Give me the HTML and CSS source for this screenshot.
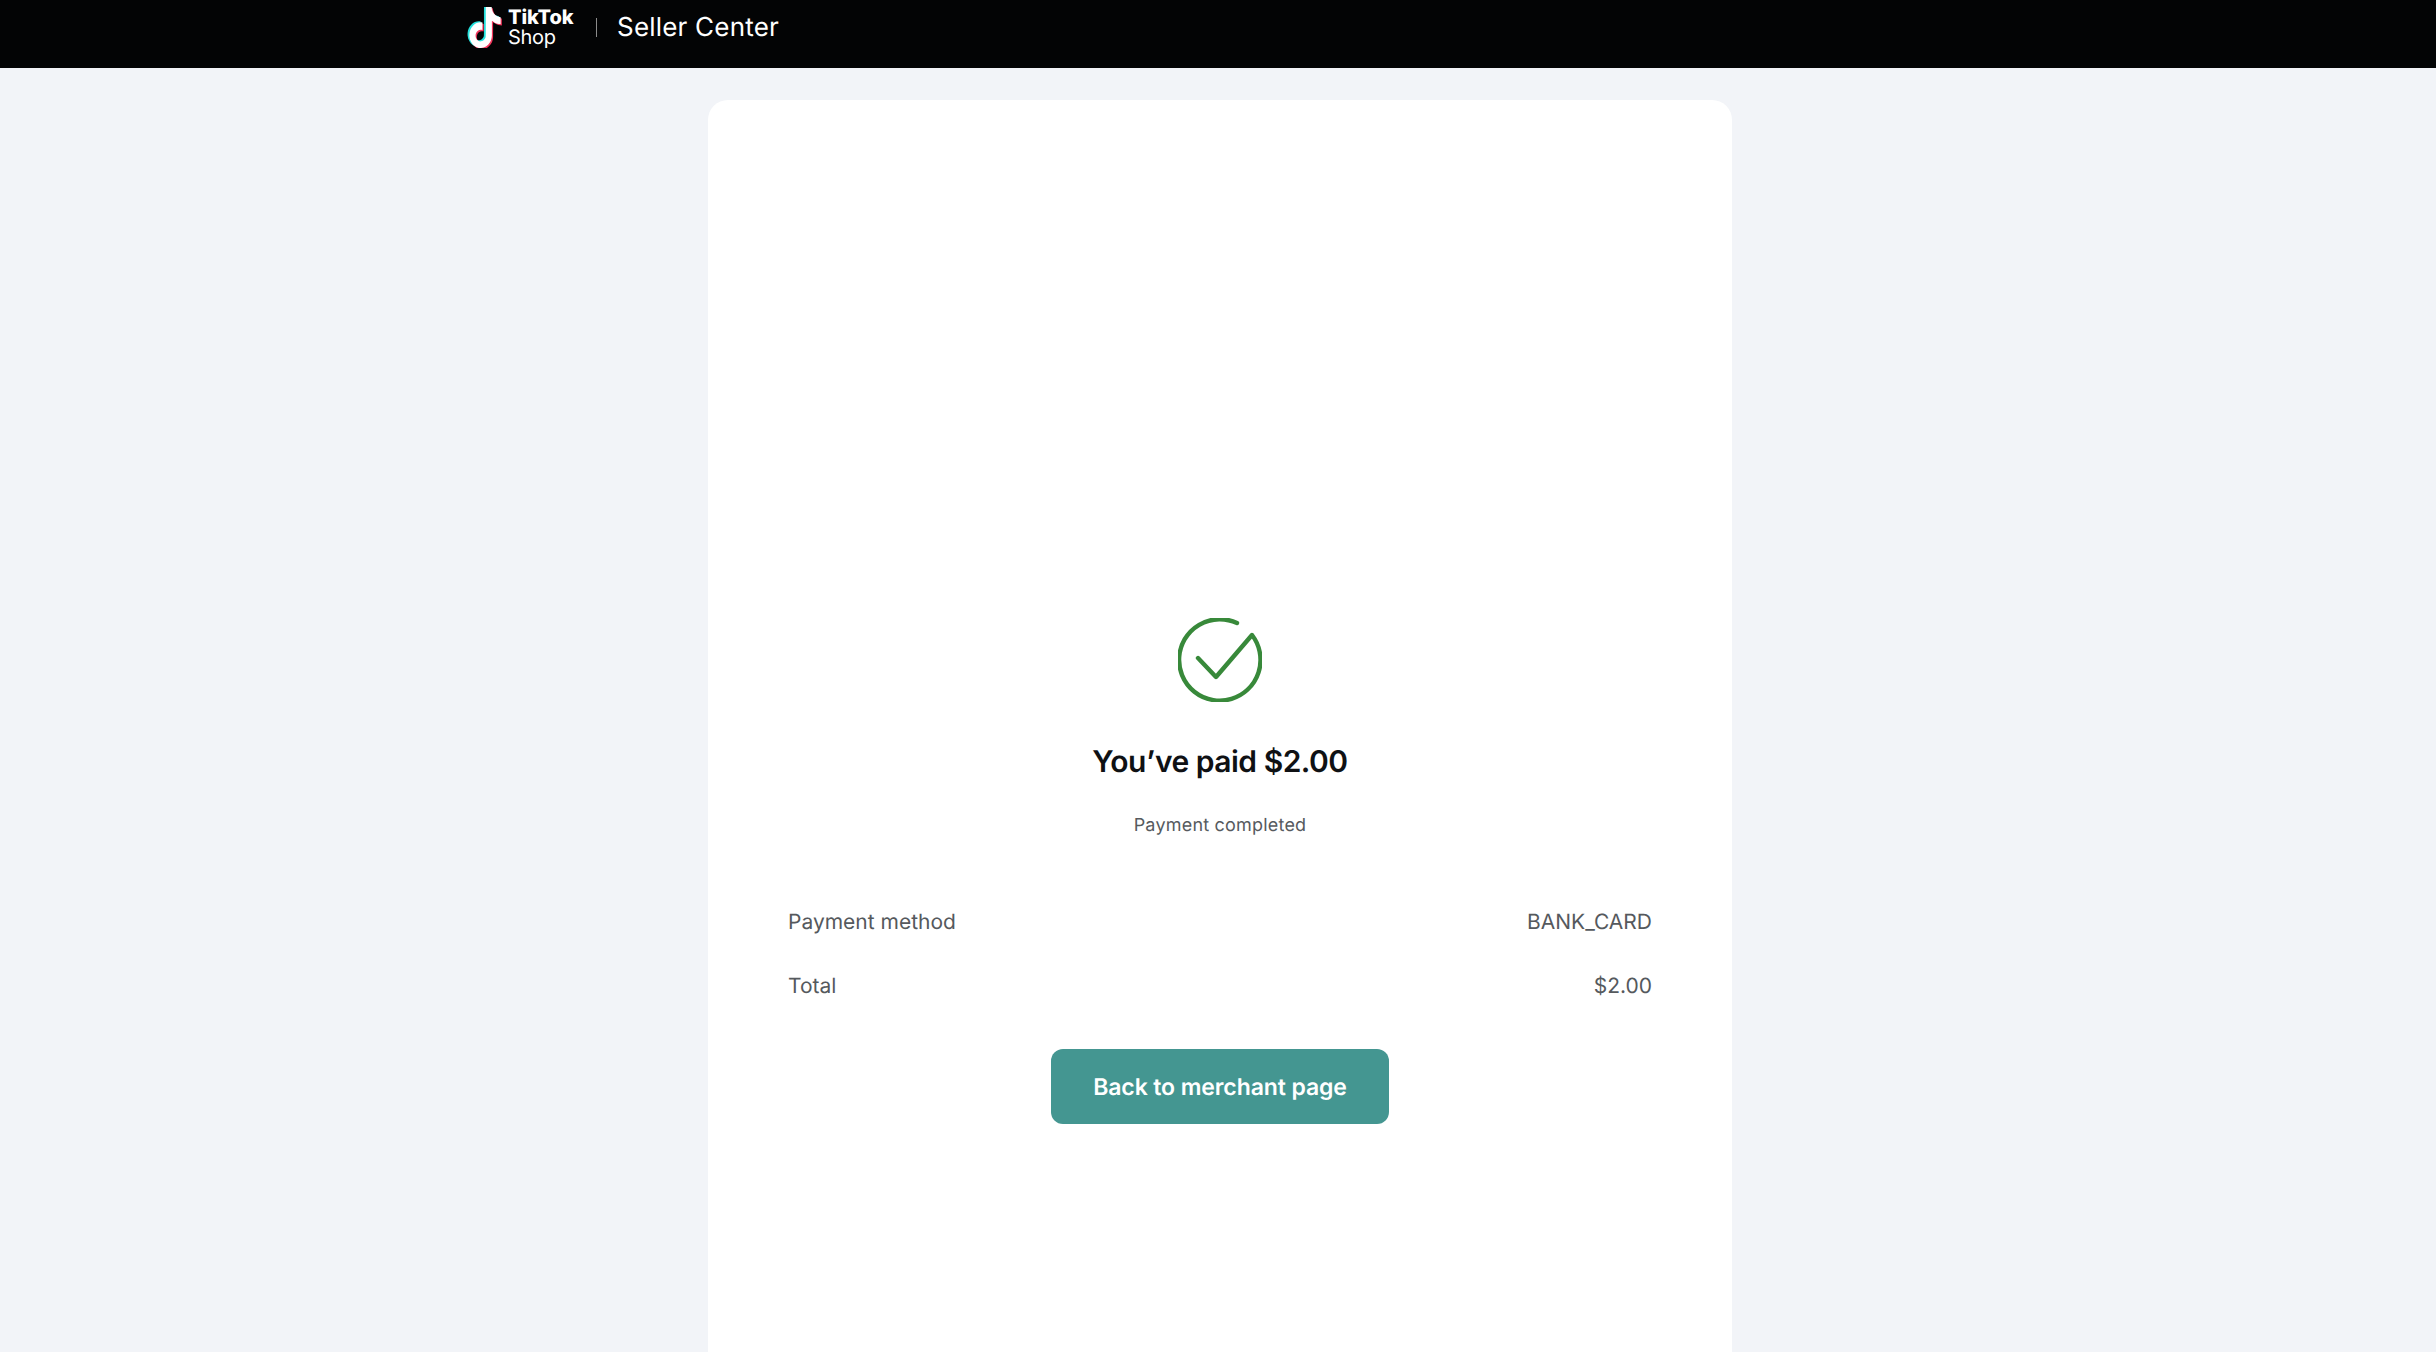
FILE: index.html
```html
<!DOCTYPE html>
<html lang="en">
<head>
<meta charset="utf-8">
<title>Seller Center</title>
<link rel="stylesheet" href="styles.css">
</head>
<body>
<header class="topbar">
  <div class="brand">
    <svg class="note" viewBox="0 0 24 24" width="36" height="41" preserveAspectRatio="none" aria-hidden="true">
      <path class="note-cyan" transform="translate(-1.2 -0.6)" d="M12.525.02c1.31-.02 2.61-.01 3.91-.02.08 1.53.63 3.09 1.75 4.17 1.12 1.11 2.7 1.62 4.24 1.79v4.03c-1.44-.05-2.89-.35-4.2-.97-.57-.26-1.1-.59-1.62-.93-.01 2.92.01 5.84-.02 8.75-.08 1.4-.54 2.79-1.35 3.94-1.31 1.92-3.58 3.17-5.91 3.21-1.43.08-2.86-.31-4.08-1.03-2.02-1.19-3.44-3.37-3.65-5.71-.02-.5-.03-1-.01-1.49.18-1.9 1.12-3.72 2.58-4.96 1.66-1.44 3.98-2.13 6.15-1.72.02 1.48-.04 2.96-.04 4.44-.99-.32-2.15-.23-3.02.37-.63.41-1.11 1.04-1.36 1.75-.21.51-.15 1.07-.14 1.61.24 1.64 1.82 3.02 3.5 2.87 1.12-.01 2.19-.66 2.77-1.61.19-.33.4-.67.41-1.06.1-1.79.06-3.57.07-5.36.01-4.03-.01-8.05.02-12.07z"/>
      <path class="note-red" transform="translate(0.8 0.8)" d="M12.525.02c1.31-.02 2.61-.01 3.91-.02.08 1.53.63 3.09 1.75 4.17 1.12 1.11 2.7 1.62 4.24 1.79v4.03c-1.44-.05-2.89-.35-4.2-.97-.57-.26-1.1-.59-1.62-.93-.01 2.92.01 5.84-.02 8.75-.08 1.4-.54 2.79-1.35 3.94-1.31 1.92-3.58 3.17-5.91 3.21-1.43.08-2.86-.31-4.08-1.03-2.02-1.19-3.44-3.37-3.65-5.71-.02-.5-.03-1-.01-1.49.18-1.9 1.12-3.72 2.58-4.96 1.66-1.44 3.98-2.13 6.15-1.72.02 1.48-.04 2.96-.04 4.44-.99-.32-2.15-.23-3.02.37-.63.41-1.11 1.04-1.36 1.75-.21.51-.15 1.07-.14 1.61.24 1.64 1.82 3.02 3.5 2.87 1.12-.01 2.19-.66 2.77-1.61.19-.33.4-.67.41-1.06.1-1.79.06-3.57.07-5.36.01-4.03-.01-8.05.02-12.07z"/>
      <path class="note-white" d="M12.525.02c1.31-.02 2.61-.01 3.91-.02.08 1.53.63 3.09 1.75 4.17 1.12 1.11 2.7 1.62 4.24 1.79v4.03c-1.44-.05-2.89-.35-4.2-.97-.57-.26-1.1-.59-1.62-.93-.01 2.92.01 5.84-.02 8.75-.08 1.4-.54 2.79-1.35 3.94-1.31 1.92-3.58 3.17-5.91 3.21-1.43.08-2.86-.31-4.08-1.03-2.02-1.19-3.44-3.37-3.65-5.71-.02-.5-.03-1-.01-1.49.18-1.9 1.12-3.72 2.58-4.96 1.66-1.44 3.98-2.13 6.15-1.72.02 1.48-.04 2.96-.04 4.44-.99-.32-2.15-.23-3.02.37-.63.41-1.11 1.04-1.36 1.75-.21.51-.15 1.07-.14 1.61.24 1.64 1.82 3.02 3.5 2.87 1.12-.01 2.19-.66 2.77-1.61.19-.33.4-.67.41-1.06.1-1.79.06-3.57.07-5.36.01-4.03-.01-8.05.02-12.07z"/>
    </svg>
    <div class="wordmark">
      <span class="wm-top">TikTok</span>
      <span class="wm-bottom">Shop</span>
    </div>
  </div>
  <span class="divider"></span>
  <span class="app-name">Seller Center</span>
</header>
<main class="page">
  <section class="card">
    <svg class="check" viewBox="0 0 84 84" width="84" height="84" aria-hidden="true">
      <path d="M20 40 L38 59 L74 17 A40.7 40.7 0 1 1 59 5" />
    </svg>
    <h1 class="title">You’ve paid $2.00</h1>
    <p class="subtitle">Payment completed</p>
    <dl class="details">
      <div class="row"><dt>Payment method</dt><dd>BANK_CARD</dd></div>
      <div class="row"><dt>Total</dt><dd>$2.00</dd></div>
    </dl>
    <button class="back" type="button">Back to merchant page</button>
  </section>
</main>
</body>
</html>
```

FILE: styles.css
```css
* { box-sizing: border-box; }
html, body { margin: 0; height: 100%; }
body {
  background: #f2f4f8;
  font-family: Inter, "Liberation Sans", sans-serif;
  text-rendering: geometricPrecision;
  overflow: hidden;
}
.topbar {
  display: flex;
  align-items: center;
  height: 68px;
  padding: 0 0 14px 467px;
  background: #030405;
  color: #fff;
}
.brand { display: flex; align-items: center; gap: 5px; }
.note { display: block; flex: none; }
.note-cyan { fill: #25e0dc; }
.note-red { fill: #f2365c; }
.note-white { fill: #fff; }
.wordmark { display: flex; flex-direction: column; width: 68px; }
.wm-top { font-size: 20px; line-height: 20px; font-weight: 800; letter-spacing: -0.1px; }
.wm-bottom { font-size: 20px; line-height: 20px; font-weight: 400; letter-spacing: -0.3px; }
.divider { width: 1px; height: 19px; margin: 0 20px 0 20px; background: #8b8b8b; }
.app-name { margin-top: 2px; font-size: 26px; line-height: 32px; font-weight: 400; letter-spacing: 0.2px; }
.page {
  display: flex;
  justify-content: center;
  padding: 32px 0 0 4px;
}
.card {
  display: flex;
  flex-direction: column;
  align-items: center;
  width: 1024px;
  min-height: 1300px;
  padding: 518px 80px 0;
  background: #fff;
  border-radius: 20px;
}
.check { display: block; }
.check path {
  fill: none;
  stroke: #38893a;
  stroke-width: 4.4;
  stroke-linecap: round;
  stroke-linejoin: round;
}
.title {
  margin: 40px 0 0;
  font-size: 30px;
  line-height: 40px;
  font-weight: 600;
  letter-spacing: -0.5px;
  color: #0f1114;
}
.subtitle {
  margin: 32px 0 0;
  font-size: 18px;
  line-height: 24px;
  font-weight: 400;
  letter-spacing: 0.2px;
  color: #565a5e;
}
.details { width: 100%; margin: 71px 0 0; }
.row {
  display: flex;
  justify-content: space-between;
  height: 64px;
  font-size: 21px;
  line-height: 28px;
  color: #55595d;
}
.row dt, .row dd { margin: 0; }
.back {
  width: 338px;
  height: 75px;
  margin-top: 12px;
  border: 0;
  border-radius: 12px;
  background: #449691;
  color: #fff;
  font-family: inherit;
  font-size: 23px;
  font-weight: 600;
  letter-spacing: -0.1px;
  text-rendering: geometricPrecision;
}
```
